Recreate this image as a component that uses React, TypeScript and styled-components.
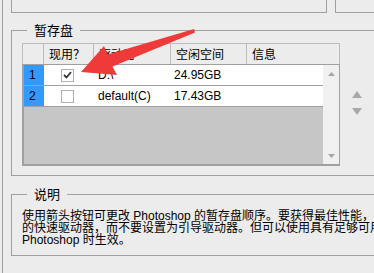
import * as React from "react";
import styled, { createGlobalStyle } from "styled-components";

const GlobalStyle = createGlobalStyle`
	html, body {
		margin: 0;
		padding: 0;
		background: #ececec;
	}
	body {
		font-family: "Liberation Sans", "Noto Sans CJK SC", sans-serif;
		font-size: 12px;
		color: #000;
	}
`;

const line = "#a0a0a0";

const Frame = styled.div`
	position: relative;
	width: 374px;
	height: 273px;
	overflow: hidden;
	background: #ececec;
`;

const Panel = styled.div`
	margin-left: 2px;
	height: 100%;
	border-left: 1px solid ${line};
	padding-left: 8px;
`;

const TopRow = styled.div`
	display: flex;
	height: 12px;
`;

const TopBox = styled.div<{ $grow?: boolean }>`
	box-sizing: border-box;
	height: 13px;
	border: 1px solid ${line};
	border-top: none;
	${p => (p.$grow ? "flex: 1; margin-left: 8px; border-right: none;" : "width: 316px;")}
`;

const Group = styled.fieldset<{ $top: number }>`
	box-sizing: border-box;
	width: 400px;
	margin: ${p => p.$top}px 0 0 0;
	border: 1px solid ${line};
	border-right: none;
	padding: 6px 0 9px 10px;
`;

const Legend = styled.legend`
	margin-left: 5px;
	padding: 0 7px;
	font-size: 13px;
	line-height: 14px;
	font-family: "Noto Sans CJK SC", sans-serif;
`;

const GroupRow = styled.div`
	display: flex;
	align-items: flex-start;
`;

const Table = styled.div`
	width: 318px;
`;

const HeaderRow = styled.div`
	display: grid;
	grid-template-columns: 22px 50px 77px 76px 93px;
	height: 21px;
	box-sizing: border-box;
	border-top: 1px solid #bcbcbc;
`;

const HeaderCell = styled.div`
	box-sizing: border-box;
	border-right: 1px solid #bcbcbc;
	padding: 1px 0 0 5px;
	line-height: 17px;
	font-family: "Noto Sans CJK SC", sans-serif;
	font-size: 12px;
	white-space: nowrap;
	&:first-child {
		border-left: 1px solid #bcbcbc;
	}
`;

const Body = styled.div`
	display: flex;
	height: 102px;
	box-sizing: border-box;
	border: 1px solid ${line};
	border-left-width: 2px;
	border-bottom-width: 2px;
`;

const Rows = styled.div`
	flex: 1;
	background: #c6c6c6;
`;

const Row = styled.div`
	display: grid;
	grid-template-columns: 20px 50px 77px 76px 1fr;
	height: 21px;
	box-sizing: border-box;
	background: #fff;
	border-bottom: 1px solid ${line};
`;

const Cell = styled.div<{ $pad?: number }>`
	display: flex;
	align-items: center;
	padding-left: ${p => p.$pad ?? 4}px;
	white-space: nowrap;
	font-size: 12px;
`;

const NumCell = styled(Cell)`
	background: #3399ff;
	padding-left: 5px;
`;

const Check = styled.div`
	box-sizing: border-box;
	width: 13px;
	height: 13px;
	border: 1px solid #b0b0b0;
	background: #fff;
	display: flex;
	align-items: center;
	justify-content: center;
`;

const Scrollbar = styled.div`
	width: 16px;
	background: #f0f0f0;
	display: flex;
	flex-direction: column;
	align-items: center;
	justify-content: space-between;
	padding: 7px 0 6px;
	box-sizing: border-box;
`;

const Mover = styled.div`
	display: flex;
	flex-direction: column;
	gap: 10px;
	margin: 48px 0 0 12px;
`;

const Note = styled.div`
	padding-top: 3px;
	line-height: 12px;
	font-size: 12px;
	white-space: nowrap;
	font-family: "Liberation Sans", "Noto Sans CJK SC", sans-serif;
`;

const NoteLine = styled.div`
	height: 12px;
	overflow: visible;
`;

const Arrow = styled.svg`
	position: absolute;
	left: 0;
	top: 0;
	pointer-events: none;
`;

const Tri = ({ w, h, down, color }: { w: number; h: number; down?: boolean; color: string }) => (
	<svg width={w} height={h} viewBox={`0 0 ${w} ${h}`}>
		<polygon
			points={down ? `0,0 ${w},0 ${w / 2},${h}` : `${w / 2},0 ${w},${h} 0,${h}`}
			fill={color}
		/>
	</svg>
);

const disks = [
	{ n: 1, on: true, name: "D:\\", free: "24.95GB" },
	{ n: 2, on: false, name: "default(C)", free: "17.43GB" }
];

export default function App() {
	return (
		<Frame>
			<GlobalStyle />
			<Panel>
				<TopRow>
					<TopBox />
					<TopBox $grow />
				</TopRow>
				<Group $top={11}>
					<Legend>暂存盘</Legend>
					<GroupRow>
						<Table>
							<HeaderRow>
								<HeaderCell />
								<HeaderCell>现用？</HeaderCell>
								<HeaderCell>驱动器</HeaderCell>
								<HeaderCell>空闲空间</HeaderCell>
								<HeaderCell>信息</HeaderCell>
							</HeaderRow>
							<Body>
								<Rows>
									{disks.map(d => (
										<Row key={d.n}>
											<NumCell>{d.n}</NumCell>
											<Cell $pad={17}>
												<Check>
													{d.on && (
														<svg width="9" height="8" viewBox="0 0 9 8">
															<path d="M1 4 L3.5 6.5 L8 1" stroke="#333" strokeWidth="1.8" fill="none" />
														</svg>
													)}
												</Check>
											</Cell>
											<Cell>{d.name}</Cell>
											<Cell $pad={3}>{d.free}</Cell>
											<Cell />
										</Row>
									))}
								</Rows>
								<Scrollbar>
									<Tri w={7} h={4} color="#a6a6a6" />
									<Tri w={7} h={4} down color="#a6a6a6" />
								</Scrollbar>
							</Body>
						</Table>
						<Mover>
							<Tri w={10} h={7} color="#a8a8a8" />
							<Tri w={10} h={7} down color="#a8a8a8" />
						</Mover>
					</GroupRow>
				</Group>
				<Group $top={11}>
					<Legend>说明</Legend>
					<Note>
						<NoteLine>使用箭头按钮可更改 Photoshop 的暂存盘顺序。要获得最佳性能，应</NoteLine>
						<NoteLine>的快速驱动器，而不要设置为引导驱动器。但可以使用具有足够可用</NoteLine>
						<NoteLine>Photoshop 时生效。</NoteLine>
					</Note>
				</Group>
			</Panel>
			<Arrow width="374" height="273" viewBox="0 0 374 273">
				<polygon
					points="81,72 104,46 107.5,54.5 194,29 195,32.5 112.5,66.5 117,75"
					fill="#f03a3a"
				/>
			</Arrow>
		</Frame>
	);
}
